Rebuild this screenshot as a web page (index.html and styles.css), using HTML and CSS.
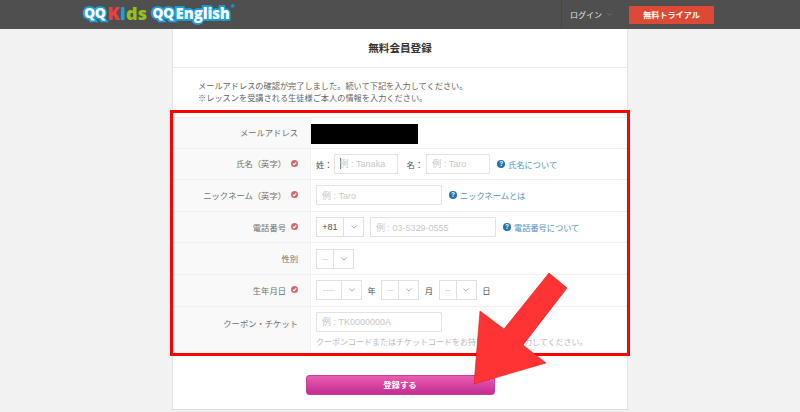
FILE: index.html
```html
<!DOCTYPE html>
<html lang="ja">
<head>
    <meta charset="UTF-8">
    <meta name="viewport" content="width=device-width, initial-scale=1.0">
    <title>無料会員登録</title>
    <link rel="stylesheet" href="styles.css">
</head>
<body>
    <svg class="defs" width="0" height="0">
        <symbol id="check" viewBox="0 0 10 10">
            <circle cx="5" cy="5" r="5" fill="#d4686c"/>
            <polyline points="2.6,5.1 4.4,6.9 7.5,3.4" fill="none" stroke="#fff" stroke-width="1.5"/>
        </symbol>
        <symbol id="chev" viewBox="0 0 8 5">
            <polyline points="0.5,0.5 4,4 7.5,0.5" fill="none" stroke="#888" stroke-width="0.9"/>
        </symbol>
    </svg>

    <div class="navbar">
        <div class="logo">
            <span class="qq">QQ</span>
            <span class="kids"><b class="k">K</b><b class="i">i</b><b class="d">ds</b></span>
            <span class="qq">QQ</span>
            <span class="english">English</span>
            <span class="reg">®</span>
        </div>
        <div class="nav-right">
            <div class="login">ログイン <svg class="chev-sm"><use href="#chev"/></svg></div>
            <a class="trial" href="#">無料トライアル</a>
        </div>
    </div>

    <div class="card">
        <h1>無料会員登録</h1>
        <div class="intro">
            <p>メールアドレスの確認が完了しました。続いて下記を入力してください。</p>
            <p>※レッスンを受講される生徒様ご本人の情報を入力ください。</p>
        </div>

        <div class="form-table">
            <div class="row">
                <div class="label">メールアドレス</div>
                <div class="field"><div class="mask"></div></div>
            </div>
            <div class="row">
                <div class="label">氏名（英字）<svg class="req"><use href="#check"/></svg></div>
                <div class="field">
                    <span class="unit unit-name">姓：</span>
                    <div class="input w-name caret">例 : Tanaka</div>
                    <span class="unit unit-given">名：</span>
                    <div class="input w-name">例 : Taro</div>
                    <a class="help" href="#"><span class="help-icon">?</span>氏名について</a>
                </div>
            </div>
            <div class="row">
                <div class="label">ニックネーム（英字）<svg class="req"><use href="#check"/></svg></div>
                <div class="field">
                    <div class="input w-long">例 : Taro</div>
                    <a class="help" href="#"><span class="help-icon">?</span>ニックネームとは</a>
                </div>
            </div>
            <div class="row">
                <div class="label">電話番号<svg class="req"><use href="#check"/></svg></div>
                <div class="field">
                    <div class="select w-tel"><span class="val dark">+81</span><span class="arrow"><svg><use href="#chev"/></svg></span></div>
                    <div class="input w-long tel">例 : 03-5329-0555</div>
                    <a class="help" href="#"><span class="help-icon">?</span>電話番号について</a>
                </div>
            </div>
            <div class="row">
                <div class="label">性別</div>
                <div class="field">
                    <div class="select w-sex"><span class="val">--</span><span class="arrow"><svg><use href="#chev"/></svg></span></div>
                </div>
            </div>
            <div class="row">
                <div class="label">生年月日<svg class="req"><use href="#check"/></svg></div>
                <div class="field date">
                    <div class="select w-year"><span class="val">----</span><span class="arrow"><svg><use href="#chev"/></svg></span></div>
                    <span class="unit">年</span>
                    <div class="select w-sex"><span class="val">--</span><span class="arrow"><svg><use href="#chev"/></svg></span></div>
                    <span class="unit">月</span>
                    <div class="select w-sex"><span class="val">--</span><span class="arrow"><svg><use href="#chev"/></svg></span></div>
                    <span class="unit">日</span>
                </div>
            </div>
            <div class="row row-last">
                <div class="label">クーポン・チケット</div>
                <div class="field field-stack">
                    <div class="input w-long">例 : TK0000000A</div>
                    <p class="hint">クーポンコードまたはチケットコードをお持ちの場合は入力してください。</p>
                </div>
            </div>
            <div class="red-box"></div>
        </div>

        <div class="actions">
            <button class="submit-btn" type="button">登録する</button>
        </div>
    </div>

    <svg class="arrow-mark" width="800" height="412" viewBox="0 0 800 412">
        <polygon points="549,273 567,288 523,345 546,363 474,384 480,311 504,329" fill="#ff3333" stroke="#f01818" stroke-width="0.6"/>
    </svg>
</body>
</html>
```

FILE: styles.css
```css
* {
    box-sizing: border-box;
}

html, body {
    height: 412px;
    overflow: hidden;
}

body {
    margin: 0;
    background-color: #f2f2f2;
    color: #666;
    font-family: "Liberation Sans", "Noto Sans CJK JP", sans-serif;
    font-size: 8.2px;
    position: relative;
}

.defs {
    position: absolute;
}

/* top bar */
.navbar {
    height: 29px;
    background-color: #4f4f4f;
    display: flex;
    justify-content: space-between;
    align-items: center;
    padding: 0 86px 0 84px;
}

.logo {
    display: flex;
    align-items: center;
    padding-bottom: 3px;
    font-family: "Open Sans", "Liberation Sans", sans-serif;
    font-size: 14px;
    font-weight: 800;
    line-height: 1;
}

.logo .qq,
.logo .english {
    -webkit-text-stroke: 3.6px #1a9fdc;
    paint-order: stroke fill;
    color: #fff;
}

.logo .qq {
    letter-spacing: -0.5px;
}

.logo .english {
    margin-left: 2px;
    font-size: 15px;
    letter-spacing: -0.1px;
}

.logo .reg {
    align-self: flex-start;
    margin-left: 1px;
    color: #1a9fdc;
    font-size: 5px;
}

.logo .kids {
    margin: 0 5px 0 2px;
    font-size: 18px;
    letter-spacing: 0.2px;
}

.logo .k { color: #ea3f3f; }
.logo .i { color: #1a9fdc; }
.logo .d { color: #94c11f; }

.nav-right {
    display: flex;
    align-items: center;
    height: 29px;
}

.login {
    height: 29px;
    border-left: 1px solid #474747;
    padding: 0 17px 0 8px;
    display: flex;
    align-items: center;
    gap: 5px;
    color: #e6e6e6;
    font-size: 8px;
}

.chev-sm {
    width: 5px;
    height: 3px;
}

.trial {
    width: 85px;
    height: 18px;
    background-color: #dc4a35;
    border-radius: 1px;
    color: #fff;
    font-size: 8.1px;
    font-weight: bold;
    text-decoration: none;
    display: flex;
    justify-content: center;
    align-items: center;
}

/* main card */
.card {
    width: 456px;
    height: 381px;
    margin: 0 auto;
    background-color: #fff;
    border-left: 1px solid #e2e2e2;
    border-right: 1px solid #e2e2e2;
    border-bottom: 1px solid #d8dce2;
}

.card h1 {
    margin: 0;
    height: 39px;
    padding-bottom: 2px;
    border-bottom: 1px solid #ececf0;
    color: #333;
    font-size: 10.6px;
    font-weight: bold;
    display: flex;
    justify-content: center;
    align-items: center;
}

.intro {
    height: 49px;
    padding: 13px 0 0 25px;
}

.intro p {
    margin: 0;
    line-height: 12px;
}

.form-table {
    position: relative;
}

.row {
    display: flex;
    height: 31.6px;
    border-bottom: 1px solid #f0f0f2;
}

.row:first-child {
    border-top: 1px solid #f0f0f2;
}

.row-last {
    height: 46px;
    border-bottom: 0;
}

.label {
    width: 138px;
    flex-shrink: 0;
    padding-right: 12px;
    padding-bottom: 1px;
    background-color: #f9f9f9;
    border-right: 1px solid #f0f0f2;
    color: #707070;
    display: flex;
    justify-content: flex-end;
    align-items: center;
    font-size: 8.3px;
}

.row-last .label {
    align-items: flex-start;
    padding-top: 10px;
}

.req {
    width: 7px;
    height: 7px;
    margin-left: 5px;
}

.field {
    flex: 1;
    display: flex;
    align-items: center;
    padding-left: 5px;
}

.field-stack {
    flex-direction: column;
    align-items: flex-start;
    padding-top: 5px;
}

.mask {
    width: 107px;
    height: 20px;
    margin: 2px 0 0 -5px;
    background-color: #000;
}

.unit {
    color: #555;
    font-size: 8.3px;
}

.unit-name {
    margin-right: 1px;
}

.unit-given {
    margin: 0 3px 0 9px;
}

.date .unit {
    margin: 0 5.5px;
}

.input {
    height: 20px;
    border: 1px solid #e2e3e8;
    border-radius: 1px;
    padding-left: 5px;
    color: #c8c8c8;
    font-size: 9px;
    display: flex;
    align-items: center;
    background-color: #fff;
}

.w-name {
    width: 64px;
}

.w-long {
    width: 126px;
}

.tel {
    margin-left: 6px;
}

.caret::before {
    content: "";
    width: 1px;
    height: 11px;
    margin-right: -1px;
    background-color: #777;
}

.select {
    height: 20px;
    border: 1px solid #e0e0e6;
    display: flex;
    background-color: #fff;
}

.select .val {
    flex: 1;
    display: flex;
    justify-content: center;
    align-items: center;
    color: #c8c8c8;
    font-size: 9px;
}

.select .val.dark {
    color: #555;
}

.select .arrow {
    width: 20px;
    border-left: 1px solid #e0e0e6;
    display: flex;
    justify-content: center;
    align-items: center;
}

.select .arrow svg {
    width: 6px;
    height: 4px;
}

.w-tel { width: 48px; }
.w-sex { width: 38px; }
.w-year { width: 46px; }

.help {
    margin-left: 7px;
    display: flex;
    align-items: center;
    color: #4f94c6;
    text-decoration: none;
}

.help-icon {
    width: 8px;
    height: 8px;
    margin-right: 3px;
    border-radius: 50%;
    background-color: #1f75ad;
    color: #fff;
    font-size: 6.5px;
    font-weight: bold;
    line-height: 8px;
    text-align: center;
}

.hint {
    margin: 4px 0 0;
    color: #bbb;
    font-size: 8px;
}

/* annotations drawn on top of the form */
.red-box {
    position: absolute;
    top: -7px;
    left: -3px;
    right: -3px;
    bottom: -3px;
    border: 3px solid #ff0000;
}

.actions {
    margin-top: 22px;
    display: flex;
    justify-content: center;
}

.submit-btn {
    width: 189px;
    height: 20px;
    padding: 0 0 2px;
    border: 1px solid #c9409c;
    border-radius: 3px;
    background: linear-gradient(#ea5cb2, #c42c90);
    color: #fff;
    font-family: inherit;
    font-size: 8.4px;
    font-weight: bold;
}

.arrow-mark {
    position: absolute;
    top: 0;
    left: 0;
}
```
